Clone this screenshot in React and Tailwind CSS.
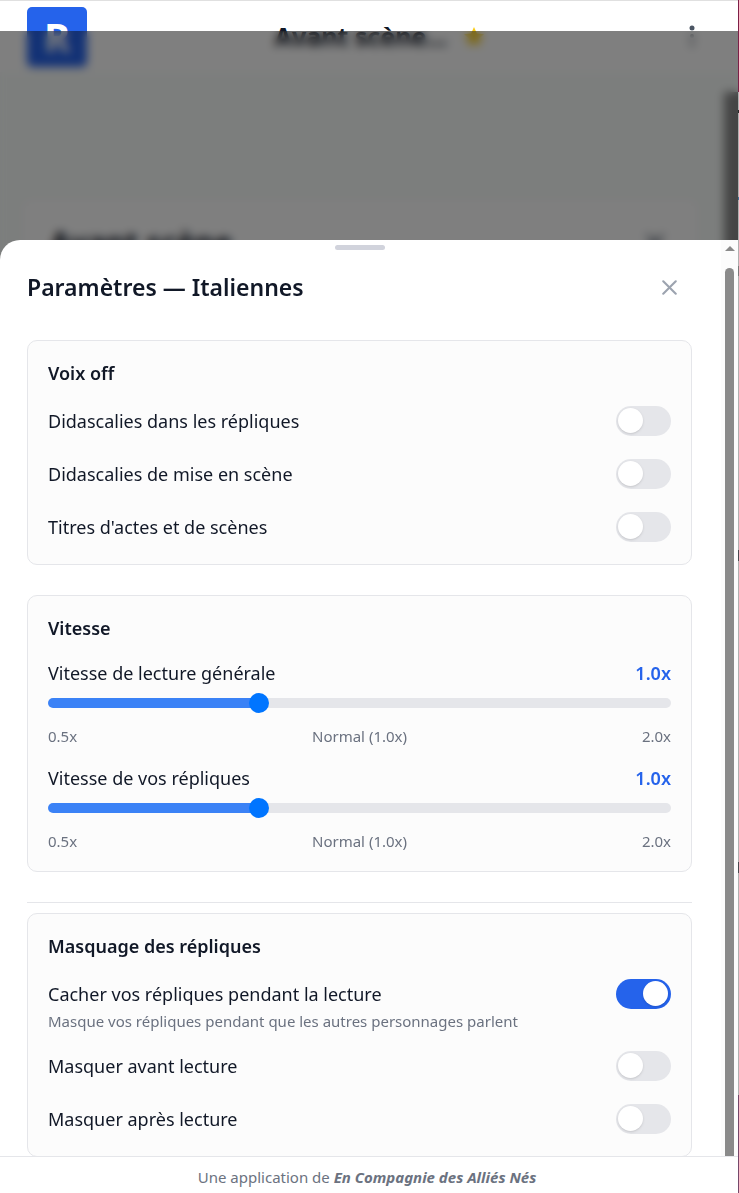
import React, { useState } from "react";
import { X } from "lucide-react";

function Switch({ id, on, onChange }) {
  return (
    <span className="relative inline-flex shrink-0">
      <input
        id={id}
        type="checkbox"
        role="switch"
        checked={on}
        onChange={(e) => onChange(e.target.checked)}
        className="peer h-[30px] w-[55px] cursor-pointer appearance-none rounded-full bg-[#e5e6ea] checked:bg-[#2563eb]"
      />
      <span className="pointer-events-none absolute top-[2px] left-[2px] size-[25px] rounded-full bg-white shadow peer-checked:right-[3px] peer-checked:left-auto" />
    </span>
  );
}

function ToggleRow({ id, label, initial = false }) {
  const [on, setOn] = useState(initial);
  return (
    <div className="flex h-[30px] items-center justify-between gap-4">
      <label htmlFor={id} className="text-[18px] leading-[25px]">
        {label}
      </label>
      <Switch id={id} on={on} onChange={setOn} />
    </div>
  );
}

function SpeedSlider({ id, label }) {
  const [value, setValue] = useState(1);
  const fill = ((value - 0.5) / 1.5) * 100;
  return (
    <div>
      <div className="flex justify-between text-[18px] leading-[25px]">
        <label htmlFor={id}>{label}</label>
        <output htmlFor={id} className="font-semibold text-[#2563eb]">
          {value.toFixed(1)}x
        </output>
      </div>
      <input
        id={id}
        type="range"
        min="0.5"
        max="2"
        step="0.1"
        value={value}
        onChange={(e) => setValue(Number(e.target.value))}
        style={{ "--fill": `${fill}%` }}
        className="mt-[7px] block h-5 w-full cursor-pointer appearance-none bg-transparent [&::-webkit-slider-runnable-track]:h-[10px] [&::-webkit-slider-runnable-track]:rounded-full [&::-webkit-slider-runnable-track]:bg-[linear-gradient(to_right,#3b82f6_var(--fill),#e5e6ea_var(--fill))] [&::-webkit-slider-thumb]:-mt-[5px] [&::-webkit-slider-thumb]:size-5 [&::-webkit-slider-thumb]:appearance-none [&::-webkit-slider-thumb]:rounded-full [&::-webkit-slider-thumb]:bg-[#0075ff]"
      />
      <div className="mt-[13px] flex justify-between text-[15px] leading-5 text-[#6b7280]">
        <span>0.5x</span>
        <span>Normal (1.0x)</span>
        <span>2.0x</span>
      </div>
    </div>
  );
}

function Card({ title, children }) {
  return (
    <section className="rounded-[10px] border border-[#e5e6ea] bg-[#fcfcfc] px-5 pt-5">
      <h3 className="mb-5 text-[18px] leading-[25px] font-semibold">{title}</h3>
      {children}
    </section>
  );
}

function Header() {
  return (
    <header className="flex h-[72px] shrink-0 items-center justify-between border-t border-[#e0e0e0] bg-white px-[27px] shadow-sm">
      <a
        href="#accueil"
        className="flex size-[60px] items-center justify-center rounded-[5px] bg-[#2563eb] text-[40px] leading-none font-bold text-white"
      >
        R
      </a>
      <h1 className="flex items-center gap-4 text-[25px] font-bold">
        Avant scène...
        <svg viewBox="0 0 24 24" className="size-[22px] fill-[#facc15]">
          <path d="M12 1l3.2 7.2 7.8.8-5.900 5.200 1.700 7.700L12 17.900l-6.800 4 1.700-7.700L1 9l7.800-.8z" />
        </svg>
      </h1>
      <button type="button" aria-label="Menu" className="flex w-[38px] justify-center">
        <svg viewBox="0 0 6 24" className="h-6 w-[6px] fill-[#4b5563]">
          <circle cx="3" cy="3" r="2.500" />
          <circle cx="3" cy="11" r="2" />
          <circle cx="3" cy="19" r="2" />
        </svg>
      </button>
    </header>
  );
}

function ScrollBar() {
  return (
    <div aria-hidden="true" className="flex w-[17px] shrink-0 flex-col items-center bg-[#fcfcfc] pt-[6px]">
      <svg viewBox="0 0 10 5" className="h-[5px] w-[10px] fill-[#8a8a8a]">
        <path d="M5 0l5 5H0z" />
      </svg>
      <div className="mt-[17px] w-[9px] grow rounded-t-full bg-[#8a8a8a]" />
    </div>
  );
}

function WindowEdge() {
  return (
    <div aria-hidden="true" className="flex w-px shrink-0 flex-col bg-[#b0b0b0]">
      <div className="h-[92px] bg-[#7d1f47]" />
      <div className="mt-[18px] h-[3px] bg-[#2a2a2a]" />
      <div className="mt-[84px] h-[3px] bg-[#3f6f95]" />
      <div className="mt-[66px] h-[10px] bg-[#7a7a7a]" />
      <div className="mt-[274px] h-[11px] bg-[#4a4a50]" />
      <div className="mt-[301px] h-[11px] bg-[#4a4a50]" />
      <div className="grow" />
      <div className="h-[98px] bg-[#75486a]" />
    </div>
  );
}

export default function App() {
  return (
    <div className="flex h-screen font-['Noto_Sans',sans-serif] text-[#111827]">
      <div className="relative flex min-w-0 grow flex-col overflow-hidden">
        <Header />
        <main className="flex min-h-0 grow bg-[#f9fdfb]">
          <div className="mt-[125px] ml-5 grow rounded-[10px] border border-gray-200 bg-white px-[29px] pt-[22px]">
            <div className="flex items-center justify-between">
              <h2 className="text-[30px] leading-[45px] font-bold">Avant scène</h2>
              <X className="size-[30px] text-gray-600" />
            </div>
          </div>
          <div className="mt-[20px] ml-6 w-[14px] shrink-0 bg-[#8a8a8a]" />
        </main>
        <footer className="flex h-[37px] shrink-0 items-center justify-center border-t border-[#e5e6ea] bg-white pt-1 pr-1 text-[15px] leading-5 text-[#6b7280]">
          <p>
            Une application de <em className="font-bold">En Compagnie des Alliés Nés</em>
          </p>
        </footer>

        <div className="absolute inset-x-0 top-[31px] bottom-[37px] flex flex-col bg-black/50 pt-[209px] backdrop-blur-[5px]">
          <div
            role="dialog"
            aria-labelledby="dialog-title"
            className="flex min-h-0 grow overflow-hidden rounded-tl-[20px] bg-white"
          >
            <div className="flex min-w-0 grow flex-col overflow-hidden pr-[29px] pl-[27px]">
              <div className="mt-[5px] h-[5px] w-[50px] shrink-0 self-center rounded-full bg-[#d1d3dc]" />
              <div className="mt-[15px] mb-[30px] flex h-[45px] shrink-0 items-center justify-between">
                <h2 id="dialog-title" className="pb-[2px] text-[23px] leading-[30px] font-semibold">
                  Paramètres — Italiennes
                </h2>
                <button
                  type="button"
                  aria-label="Fermer"
                  className="flex size-[45px] items-center justify-center text-[#9ca3af]"
                >
                  <X className="size-[25px]" strokeWidth={2} />
                </button>
              </div>

              <Card title="Voix off">
                <div className="flex flex-col gap-[23px] pb-[22px]">
                  <ToggleRow id="didascalies-repliques" label="Didascalies dans les répliques" />
                  <ToggleRow id="didascalies-scene" label="Didascalies de mise en scène" />
                  <ToggleRow id="titres" label="Titres d'actes et de scènes" />
                </div>
              </Card>

              <div className="mt-[30px]">
                <Card title="Vitesse">
                  <div className="flex flex-col gap-5 pb-5">
                    <SpeedSlider id="vitesse-generale" label="Vitesse de lecture générale" />
                    <SpeedSlider id="vitesse-repliques" label="Vitesse de vos répliques" />
                  </div>
                </Card>
              </div>

              <div className="mt-[30px] border-t border-[#e5e6ea] pt-[10px]">
                <Card title="Masquage des répliques">
                  <ToggleRow id="cacher" label="Cacher vos répliques pendant la lecture" initial />
                  <p className="mt-[2px] text-[15px] leading-5 text-[#6b7280]">
                    Masque vos répliques pendant que les autres personnages parlent
                  </p>
                  <div className="mt-5 flex flex-col gap-[23px] pb-[22px]">
                    <ToggleRow id="masquer-avant" label="Masquer avant lecture" />
                    <ToggleRow id="masquer-apres" label="Masquer après lecture" />
                  </div>
                </Card>
              </div>
            </div>
            <ScrollBar />
          </div>
        </div>
      </div>

      <WindowEdge />
    </div>
  );
}
